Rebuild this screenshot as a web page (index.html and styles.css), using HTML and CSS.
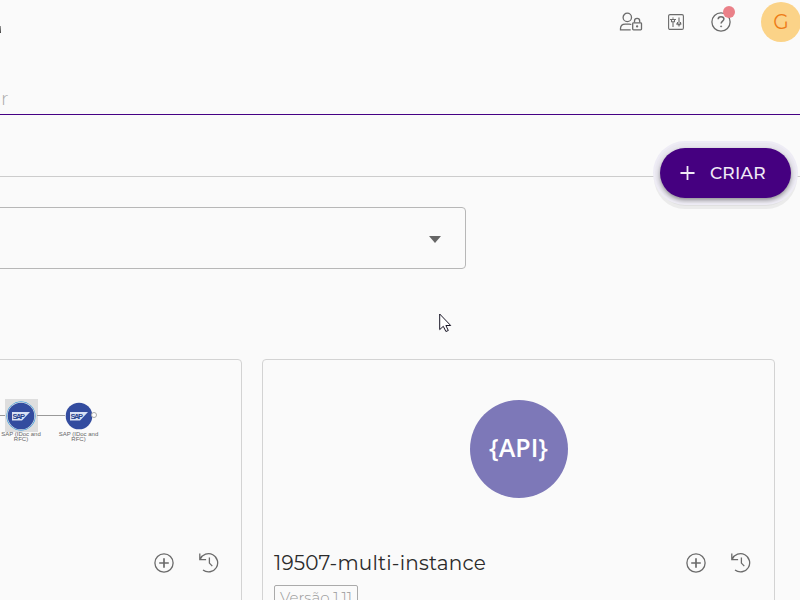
FILE: index.html
```html
<!DOCTYPE html>
<html lang="pt-BR">
<head>
<meta charset="utf-8">
<title>Pipelines</title>
<link rel="stylesheet" href="styles.css">
</head>
<body>
<svg width="0" height="0" class="defs">
  <symbol id="plus-circle" viewBox="0 0 20 20"><circle cx="10" cy="10" r="9.1"/><path d="M10 5.2v9.6M5.2 10h9.6" stroke-width="1.7"/></symbol>
  <symbol id="history" viewBox="0 0 20 20"><path d="M.8 .5v6.1h6.3M1.2 6.2A9.1 9.1 0 1 1 4 17M10.4 4.6v5.5l2.9 3"/></symbol>
  <symbol id="sap" viewBox="0 0 28 28"><circle cx="14" cy="14" r="13.3" fill="#334c9f"/><path d="M5 10h18l-8 8.5H5z" fill="#d9e2f4"/><text x="5.5" y="17" font-size="7.5" font-weight="700" textLength="12.5" fill="#29458f" stroke="none">SAP</text></symbol>
</svg>
<div class="app">
  <header class="topbar">
    <i class="title-end"></i>
    <svg class="icon users" viewBox="0 0 24 20"><circle cx="8.3" cy="5.4" r="4.2"/><path d="M11.7 17.9H1.5v-1.3c0-2.9 2-4.5 4.8-4.5h4.1c.7 0 1.4.1 1.9.4"/><rect x="13.7" y="10.8" width="8.8" height="7.1" rx=".8"/><path d="M15.5 10.6V8.9a2.6 2.6 0 0 1 5.2 0v1.7"/><circle cx="18.1" cy="14.4" r=".5" fill="#666"/></svg>
    <svg class="icon sliders" viewBox="0 0 16 16"><rect x=".6" y=".6" width="14.8" height="14.8" rx="1.4"/><path d="M5 3.5v1.3M5 8v5M11 3.5v5.3M11 11.2v1.3M2 5.5h6M3.5 5.5v2.3h3V5.5M8 10h5.5M9.5 10V8M12.5 10V8M9.5 10.8h3"/></svg>
    <div class="help"><svg class="icon" viewBox="0 0 20 20"><circle cx="10" cy="10" r="9.1"/><path d="M7.2 7.3C7.2 5.7 8.4 4.8 10 4.8s2.9.9 2.9 2.3c0 2-2.8 2-2.8 4.4" stroke-width="1.5"/><circle cx="10.1" cy="14.4" r=".6" fill="#666" stroke-width=".6"/></svg><i class="dot"></i></div>
    <div class="avatar">G</div>
  </header>
  <div class="search">r</div>
  <div class="toolbar">
    <button class="create"><svg viewBox="0 0 16 16"><path d="M8 .5v15M.5 8h15"/></svg><span>CRIAR</span></button>
  </div>
  <div class="select"><i class="caret"></i></div>
  <svg class="pointer" viewBox="0 0 13 20"><path d="M.7 1v15.6l3.6-3.3 2.6 5.2 2.4-1-2.4-5h4.8z"/></svg>
  <main class="cards">
    <article class="card">
      <div class="flow">
        <i class="wire lead"></i>
        <div class="node"><div class="tile selected"><svg><use href="#sap"/></svg></div><p>SAP (IDoc and<br>RFC)</p></div>
        <i class="wire"></i>
        <div class="node last"><div class="tile"><svg><use href="#sap"/></svg></div><p>SAP (IDoc and<br>RFC)</p></div>
      </div>
      <div class="row"><h2></h2><svg class="icon action"><use href="#plus-circle"/></svg><svg class="icon action"><use href="#history"/></svg></div>
    </article>
    <article class="card">
      <div class="preview"><div class="api"><span>{API}</span></div></div>
      <div class="row"><h2>19507-multi-instance</h2><svg class="icon action"><use href="#plus-circle"/></svg><svg class="icon action"><use href="#history"/></svg></div>
      <span class="version">Versão 1.11</span>
    </article>
  </main>
</div>
</body>
</html>
```
FILE: styles.css
```css
* { box-sizing: border-box; }
body { margin: 0; background: #fafafa; color: #222; font-family: Montserrat, Inter, sans-serif; }
.defs { position: absolute; }
.app { width: 800px; height: 600px; overflow: hidden; display: flex; flex-direction: column; }
.topbar { height: 44px; flex: none; display: flex; align-items: center; }
.title-end { width: 1px; height: 7px; margin: 14px 618px 0 0; background: linear-gradient(#999, #444); flex: none; }
.icon { fill: none; stroke: #6b6b6b; stroke-width: 1.3; display: block; flex: none; }
.users { width: 24px; height: 20px; margin-top: 0; }
.sliders { width: 16px; height: 16px; margin-left: 25px; stroke-width: 1.1; }
.help { position: relative; width: 20px; height: 20px; margin-left: 27px; flex: none; }
.help .icon { width: 20px; height: 20px; }
.dot { position: absolute; left: 12px; top: -6px; width: 12px; height: 12px; border-radius: 50%; background: #ea8088; }
.avatar { width: 40px; height: 40px; margin-left: 30px; flex: none; border-radius: 50%; background: #fbd388; color: #ee7c16; display: grid; place-items: center; font-size: 20px; }
.search { height: 71px; flex: none; border-bottom: 1px solid #450084; padding: 42px 0 0 1px; font-size: 19px; line-height: 25px; font-weight: 300; color: #aaa; }
.toolbar { height: 62px; flex: none; border-bottom: 1px solid #ccc; display: flex; justify-content: flex-end; padding: 33px 9px 0 0; }
.create { width: 131px; height: 50px; flex: none; border: 0; border-radius: 25px; background: #450080; color: #f0eaf6; display: flex; align-items: center; padding: 0 0 0 20px; gap: 15px; font: 500 17px Montserrat, Inter, sans-serif; letter-spacing: .25px; box-shadow: 0 2px 4px #0006, 0 0 0 5px #eae8f0, 0 0 0 7px #eeecf5, 0 5px 0 3px #e0e0e0, 0 5px 0 6px #ebebeb; position: relative; }
.create svg { width: 15px; height: 16px; stroke: #f0eaf6; stroke-width: 1.9; }
.select { width: 476px; height: 62px; flex: none; margin: 30px 0 0 -10px; border: 1px solid #b7b7b7; border-radius: 4px; display: flex; align-items: center; justify-content: flex-end; padding-right: 24px; }
.caret { border: 6px solid transparent; border-top: 7px solid #666; border-bottom: 0; margin-top: 2px; }
.pointer { width: 13px; height: 20px; flex: none; margin: 44px 0 26px 439px; fill: #fff; stroke: #181525; stroke-width: 1; }
.cards { display: grid; grid-template-columns: 512px 513px; gap: 20px; margin-left: -270px; width: 1045px; }
.card { height: 290px; border: 1px solid #d3d3d3; border-radius: 4px; padding: 0 11px; }
.preview { height: 187px; display: flex; justify-content: center; padding-top: 40px; }
.api { width: 98px; height: 98px; border-radius: 50%; background: #7d78b8; color: #fff; display: grid; place-items: center; font: 600 25px "Open Sans", sans-serif; padding-bottom: 5px; }
.row { height: 32px; display: flex; align-items: center; }
.row h2 { flex: 1; margin: 0; font-weight: 400; font-size: 20px; letter-spacing: .2px; color: #2b2b2b; white-space: nowrap; }
.action { width: 20px; height: 20px; margin-left: 25px; flex: none; }
.card:first-child .row { padding-right: 11px; }
.card + .card .row { padding-right: 12px; }
.version { display: block; width: 84px; height: 26px; margin-top: 6px; border: 1px solid #aaa; border-radius: 2px; font-size: 15px; line-height: 23px; font-weight: 300; color: #999; text-align: center; white-space: nowrap; }
.flow { height: 187px; display: flex; align-items: flex-start; padding: 39px 0 0 258px; }
.wire { width: 28px; height: 1px; margin-top: 16px; background: #999; flex: none; }
.wire.lead { width: 5px; }
.node { width: 32px; display: flex; flex-direction: column; align-items: center; flex: none; }
.node.last { width: 27px; position: relative; }
.node.last::after { content: ""; position: absolute; left: 26px; top: 13px; width: 4px; height: 4px; border: 1px solid #aaa; border-radius: 50%; background: #fff; }
.tile { width: 33px; height: 33px; display: grid; place-items: center; }
.tile.selected { background: #dedede; }
.tile svg { width: 28px; height: 28px; font-family: "Liberation Sans", sans-serif; }
.selected svg { border-radius: 50%; box-shadow: 0 0 0 .5px #168ce0; }
.node p { margin: 0; font: 6px/5px "Liberation Sans", sans-serif; color: #666; text-align: center; white-space: nowrap; }
```
